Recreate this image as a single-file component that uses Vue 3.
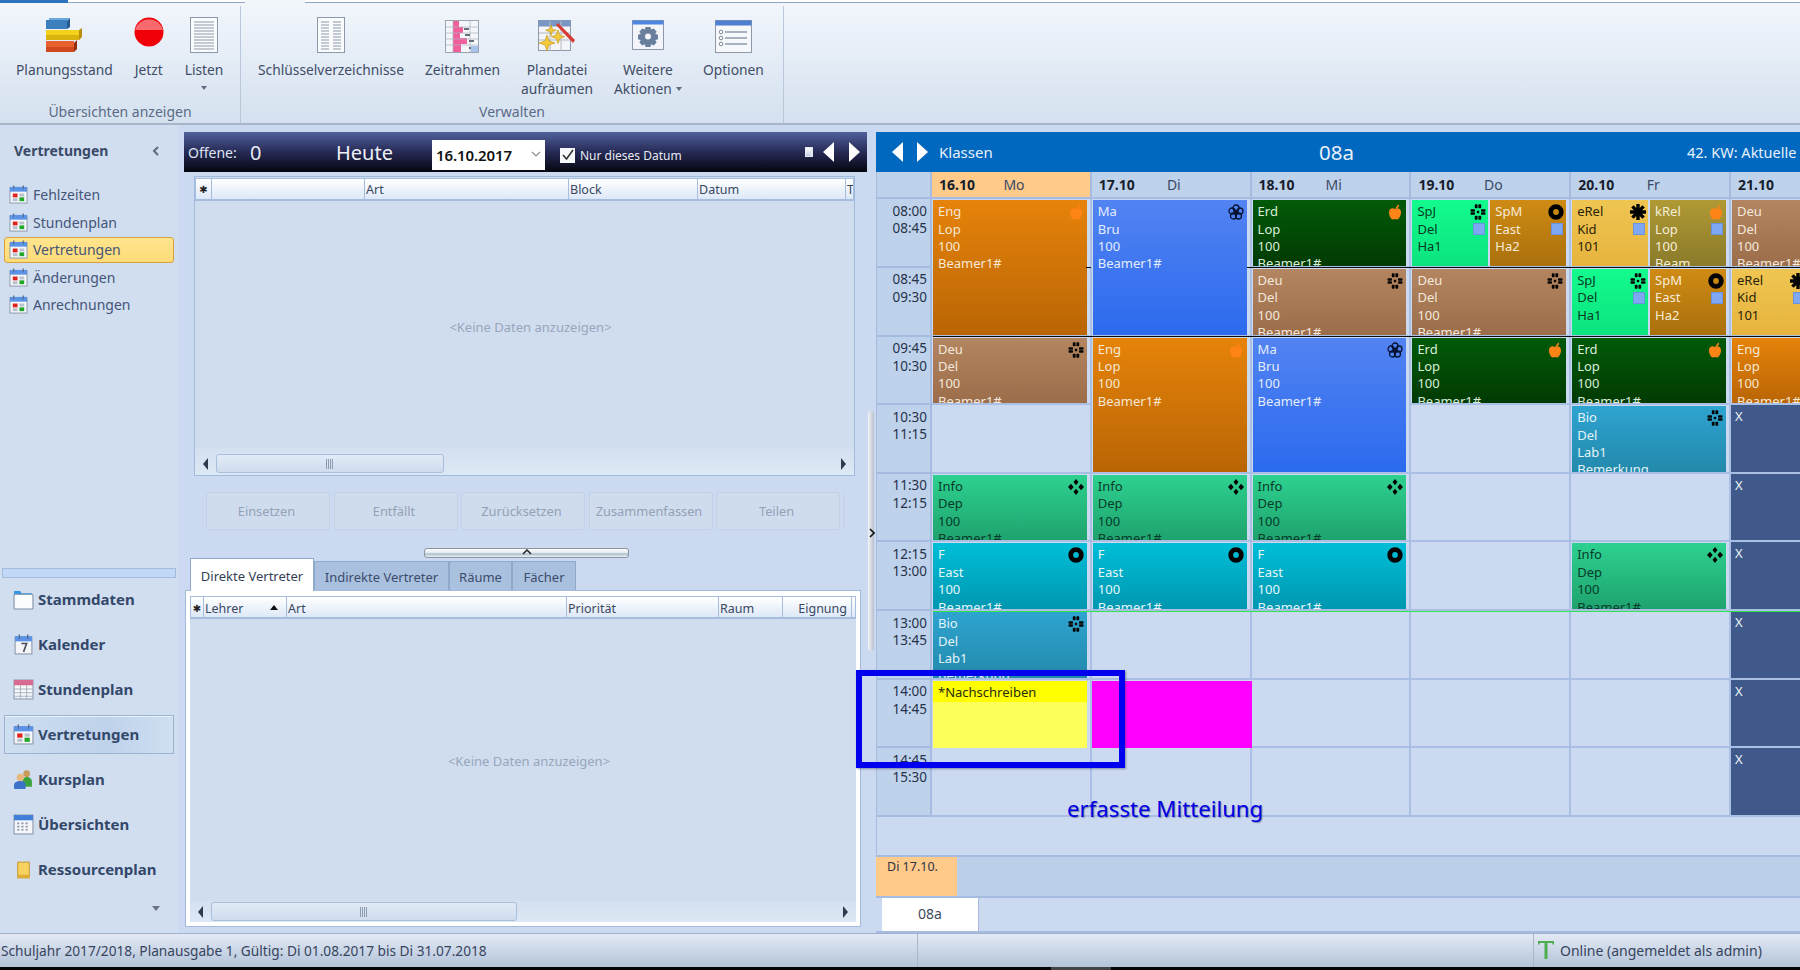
<script setup>
const L = {
  eng: { cls: 'eng', lines: ['Eng', 'Lop', '100', 'Beamer1#'], icon: 'apple' },
  ma: { cls: 'ma', lines: ['Ma', 'Bru', '100', 'Beamer1#'], icon: 'flower' },
  erd: { cls: 'erd', lines: ['Erd', 'Lop', '100', 'Beamer1#'], icon: 'apple' },
  deu: { cls: 'deu', lines: ['Deu', 'Del', '100', 'Beamer1#'], icon: 'pin' },
  info: { cls: 'info', lines: ['Info', 'Dep', '100', 'Beamer1#'], icon: 'dia' },
  f: { cls: 'fr', lines: ['F', 'East', '100', 'Beamer1#'], icon: 'ring' },
  bio: { cls: 'bio', lines: ['Bio', 'Del', 'Lab1', 'Bemerkung'], icon: 'pin' },
  spj: { cls: 'spj', lines: ['SpJ', 'Del', 'Ha1'], icon: 'pin', mark: true },
  spm: { cls: 'spm', lines: ['SpM', 'East', 'Ha2'], icon: 'ring', mark: true },
  erel: { cls: 'erel', lines: ['eRel', 'Kid', '101'], icon: 'star', mark: true },
  krel: { cls: 'krel', lines: ['kRel', 'Lop', '100', 'Beam'], icon: 'apple', mark: true }
}
const one = (k, span = 1) => ({ kind: 'one', span, parts: [L[k]] })
const two = (a, b) => ({ kind: 'two', span: 1, parts: [L[a], L[b]] })
const E = { kind: 'empty', span: 1 }
const NOTE = { kind: 'note', span: 1 }
const MAG = { kind: 'mag', span: 1 }
const X = { kind: 'x', span: 1 }

const days = [
  { date: '16.10', name: 'Mo', today: true, cells: [one('eng', 2), one('deu'), E, one('info'), one('f'), one('bio'), NOTE, E] },
  { date: '17.10', name: 'Di', cells: [one('ma', 2), one('eng', 2), one('info'), one('f'), E, MAG, E] },
  { date: '18.10', name: 'Mi', cells: [one('erd'), one('deu'), one('ma', 2), one('info'), one('f'), E, E, E] },
  { date: '19.10', name: 'Do', cells: [two('spj', 'spm'), one('deu'), one('erd'), E, E, E, E, E, E] },
  { date: '20.10', name: 'Fr', cells: [two('erel', 'krel'), two('spj', 'spm'), one('erd'), one('bio'), E, one('info'), E, E, E] },
  { date: '21.10', name: 'Sa', cells: [one('deu'), two('erel', 'krel'), one('eng'), X, X, X, X, X, X] }
]
const times = [
  ['08:00', '08:45'], ['08:45', '09:30'], ['09:45', '10:30'], ['10:30', '11:15'], ['11:30', '12:15'],
  ['12:15', '13:00'], ['13:00', '13:45'], ['14:00', '14:45'], ['14:45', '15:30']
]
const subItems = ['Fehlzeiten', 'Stundenplan', 'Vertretungen', 'Änderungen', 'Anrechnungen']
const navItems = [
  { t: 'Stammdaten', i: 'n-folder' }, { t: 'Kalender', i: 'n-cal7' }, { t: 'Stundenplan', i: 'n-table' },
  { t: 'Vertretungen', i: 'cal', active: true }, { t: 'Kursplan', i: 'n-people' }, { t: 'Übersichten', i: 'n-over' }, { t: 'Ressourcenplan', i: 'n-res' }
]
const actions = ['Einsetzen', 'Entfällt', 'Zurücksetzen', 'Zusammenfassen', 'Teilen']
</script>

<template>
  <div class="app">
    <svg class="defs" aria-hidden="true">
      <symbol id="cal" viewBox="0 0 20 20">
        <rect x="1" y="3" width="18" height="16" fill="#f4f6fa" stroke="#8b97a8" />
        <rect x="1" y="2" width="18" height="5" fill="#5b93e6" />
        <path d="M5 0.5v4M15 0.5v4" stroke="#5a6f90" stroke-width="1.4" />
        <rect x="4" y="9" width="5" height="4" fill="#e0231c" />
        <rect x="11" y="9" width="5" height="3" fill="#b9c1cc" />
        <rect x="4" y="14" width="5" height="3" fill="#b9c1cc" />
        <rect x="11" y="13" width="5" height="4" fill="#22a829" />
      </symbol>
      <symbol id="n-folder" viewBox="0 0 20 20">
        <path d="M1 4V2h6l1 2h10v3H1z" fill="#2f97e8" />
        <rect x="1" y="5" width="18" height="14" rx="1" fill="#fbfcfe" stroke="#7d8da3" />
      </symbol>
      <symbol id="n-cal7" viewBox="0 0 20 20">
        <rect x="2" y="3" width="16" height="16" fill="#f3f5f9" stroke="#8b97a8" />
        <rect x="2" y="2" width="16" height="5" fill="#5b93e6" />
        <path d="M6 0.5v4M14 0.5v4" stroke="#5a6f90" stroke-width="1.4" />
        <path d="M8 9h5l-3 8" fill="none" stroke="#444c58" stroke-width="1.5" />
      </symbol>
      <symbol id="n-table" viewBox="0 0 20 20">
        <rect x="1" y="1" width="18" height="18" fill="#f7f8fb" stroke="#8b97a8" />
        <rect x="1" y="1" width="18" height="5" fill="#d96a92" />
        <path d="M1 9.500h18M1 13h18M1 16.500h18M7 6v13M13 6v13" stroke="#a9b3c2" />
      </symbol>
      <symbol id="n-people" viewBox="0 0 20 20">
        <circle cx="13" cy="4.500" r="3.200" fill="#c99a5a" />
        <path d="M9 12c0-3 2-4.500 4-4.500s5 1 5 4.500v5H9z" fill="#3aa33f" />
        <circle cx="7" cy="8" r="3.400" fill="#e8b77b" />
        <path d="M1 19v-3.500C1 12.500 4 11.500 7 11.500s5 1 5 4V19z" fill="#3d72c9" />
      </symbol>
      <symbol id="n-over" viewBox="0 0 20 20">
        <rect x="1" y="1" width="18" height="18" fill="#f4f6fa" stroke="#8b97a8" />
        <rect x="1" y="1" width="18" height="5" fill="#3e7fd8" />
        <path d="M4 9h2M8 9h2M12 9h2M4 12h2M8 12h2M12 12h2M4 15h2M8 15h2M12 15h2" stroke="#8a96a8" stroke-width="1.600" />
      </symbol>
      <symbol id="n-res" viewBox="0 0 20 20">
        <rect x="4.500" y="3" width="11" height="15" fill="#f7d25f" stroke="#c69a34" />
        <rect x="4.500" y="15" width="11" height="3" fill="#e2ad35" />
      </symbol>
      <symbol id="apple" viewBox="0 0 16 16">
        <path d="M8.500 5C9 3 10 1.500 12 0.500c.3 2-1 3.800-3.500 4.500z" fill="#ff8418" />
        <path d="M8 5c2-1.500 6-1 6 3.500 0 3.500-2.500 7-4 7-.8 0-1.300-.5-2-.5s-1.200.5-2 .5c-1.800 0-4-3.500-4-7C2 4 6 3.500 8 5z" fill="#ff8418" />
      </symbol>
      <symbol id="flower" viewBox="0 0 16 16">
        <g fill="none" stroke="#061233" stroke-width="1.300">
          <circle cx="8" cy="4" r="3" /><circle cx="12" cy="7" r="3" /><circle cx="10.500" cy="12" r="3" /><circle cx="5.500" cy="12" r="3" /><circle cx="4" cy="7" r="3" />
        </g>
        <circle cx="8" cy="8.500" r="2.800" fill="#061233" />
      </symbol>
      <symbol id="pin" viewBox="0 0 16 16">
        <g fill="#050505">
          <rect x="4.800" y=".3" width="2.800" height="4" rx=".8" /><rect x="8.400" y=".3" width="2.800" height="4" rx=".8" />
          <rect x="4.800" y="11.700" width="2.800" height="4" rx=".8" /><rect x="8.400" y="11.700" width="2.800" height="4" rx=".8" />
          <rect x=".5" y="5.200" width="4.500" height="2.500" rx=".8" /><rect x=".5" y="8.300" width="4.500" height="2.500" rx=".8" />
          <rect x="11" y="5.200" width="4.500" height="2.500" rx=".8" /><rect x="11" y="8.300" width="4.500" height="2.500" rx=".8" />
          <rect x="6.800" y="6.800" width="2.400" height="2.400" />
        </g>
      </symbol>
      <symbol id="dia" viewBox="0 0 16 16">
        <g fill="#050505">
          <path d="M8 0l2.500 3L8 6.200 5.500 3z" /><path d="M8 9.800l2.500 3L8 16l-2.500-3.200z" />
          <path d="M3 4.800l2.600 3.200L3 11.200 0 8z" /><path d="M13 4.800l3 3.200-3 3.200L10.400 8z" />
        </g>
      </symbol>
      <symbol id="ring" viewBox="0 0 16 16">
        <circle cx="8" cy="8" r="5.300" fill="none" stroke="#020202" stroke-width="4.800" />
      </symbol>
      <symbol id="star" viewBox="0 0 16 16">
        <g stroke="#020202" stroke-width="3.400">
          <path d="M8 0v16M0 8h16M2.400 2.400l11.200 11.200M13.600 2.400L2.400 13.600" />
        </g>
      </symbol>
    </svg>

    <header class="ribbon">
      <div class="strip"><span class="s-blue"></span><span class="s-white s-a"></span><span class="s-gap"></span><span class="s-white s-b"></span></div>
      <div class="ribbon-body">
        <section class="group g1">
          <div class="btns">
            <div class="rb">
              <div class="ri">
                <svg width="38" height="36" viewBox="0 0 38 36">
                  <path d="M4 1h21l-3 3H4z" fill="#6aa7dc" /><path d="M22 4l3-3v9l-3 2z" fill="#24598f" /><rect x="1" y="3" width="21" height="9" fill="#3c7fbf" />
                  <path d="M1 13h33l3-2v9l-3 3z" fill="#b79208" /><rect x="1" y="13" width="33" height="10" fill="#f2d21a" />
                  <rect x="1" y="18" width="33" height="5" fill="#d9b40d" />
                  <path d="M29 26l3-3v9l-3 3z" fill="#93300e" /><rect x="1" y="24" width="28" height="11" fill="#e9602f" />
                  <rect x="1" y="30" width="28" height="5" fill="#cf4a1e" />
                </svg>
              </div>
              <div class="rl">Planungsstand</div>
            </div>
            <div class="rb">
              <div class="ri">
                <svg width="30" height="30" viewBox="0 0 30 30">
                  <circle cx="15" cy="15" r="14.500" fill="#f2000a" /><path d="M1 13a14.500 14.500 0 0 1 28 0z" fill="#f86a6e" />
                </svg>
              </div>
              <div class="rl">Jetzt</div>
            </div>
            <div class="rb">
              <div class="ri">
                <svg width="28" height="36" viewBox="0 0 28 36">
                  <rect x=".5" y=".5" width="27" height="35" fill="#fafbfd" stroke="#8d98a8" />
                  <path d="M4 5h20M4 8h20M4 11h20M4 14h20M4 17h20M4 20h20M4 23h20M4 26h20M4 29h20M4 32h20" stroke="#b3bbc6" stroke-width="1.500" />
                </svg>
              </div>
              <div class="rl">Listen</div>
              <div class="ar"></div>
            </div>
          </div>
          <div class="gl">Übersichten anzeigen</div>
        </section>
        <section class="group g2">
          <div class="btns">
            <div class="rb">
              <div class="ri">
                <svg width="28" height="36" viewBox="0 0 28 36">
                  <rect x=".5" y=".5" width="27" height="35" fill="#fafbfd" stroke="#8d98a8" />
                  <path d="M4 5h8M4 8h8M4 11h8M4 14h8M4 17h8M4 20h8M4 23h8M4 26h8M4 29h8M4 32h8M16 5h8M16 8h8M16 11h8M16 14h8M16 17h8M16 20h8M16 23h8M16 26h8M16 29h8M16 32h8" stroke="#b3bbc6" stroke-width="1.500" />
                </svg>
              </div>
              <div class="rl">Schlüsselverzeichnisse</div>
            </div>
            <div class="rb">
              <div class="ri ri-b">
                <svg width="34" height="33" viewBox="0 0 34 33">
                  <rect x=".5" y=".5" width="33" height="32" fill="#f4f6fa" stroke="#9aa5b4" />
                  <path d="M8 1h6v6h4v6h-3v5h7v6h-6v8H8z" fill="#f2609c" />
                  <path d="M1 7h32M1 13h32M1 19h32M1 25h32M8 1v31M25 1v31" stroke="#aab3c0" stroke-opacity=".7" />
                  <path d="M19 9h5M20 15h5M24 21h5M24 28h5" stroke="#666e78" stroke-width="2" />
                  <rect x="26" y="26" width="7" height="6" fill="#a9c4ec" />
                </svg>
              </div>
              <div class="rl">Zeitrahmen</div>
            </div>
            <div class="rb">
              <div class="ri ri-b">
                <svg width="38" height="31" viewBox="0 0 38 31">
                  <rect x=".5" y=".5" width="32" height="30" fill="#f3f5f8" stroke="#8d98a8" />
                  <rect x=".5" y=".5" width="32" height="6" fill="#7a97c4" />
                  <path d="M1 13h32M1 20h32M12 1v30M23 1v30" stroke="#b3bbc6" />
                  <path d="M18 5l2-2 17 17-2 3z" fill="#d63a32" />
                  <path d="M9 15l2 6 6 2-6 2-2 6-2-6-6-2 6-2z" fill="#f3cb3c" stroke="#c9991d" stroke-width=".7" />
                  <path d="M20 10l1.700 5 5 1.700-5 1.700-1.700 5-1.700-5-5-1.700 5-1.700z" fill="#f3cb3c" stroke="#c9991d" stroke-width=".7" />
                  <path d="M13 5l1.300 4 4 1.300-4 1.300-1.300 4-1.300-4-4-1.300 4-1.300z" fill="#f3cb3c" stroke="#c9991d" stroke-width=".7" />
                </svg>
              </div>
              <div class="rl">Plandatei<br />aufräumen</div>
            </div>
            <div class="rb">
              <div class="ri ri-b">
                <svg width="32" height="30" viewBox="0 0 32 30">
                  <rect x=".5" y=".5" width="31" height="29" fill="#f3f5fa" stroke="#8d98a8" />
                  <rect x=".5" y=".5" width="31" height="4" fill="#4f86e0" />
                  <path d="M13.500 7h5l.7 2.600 2.400-1 3 3-1.300 2.300 2.700.8v4.600l-2.700.8 1.300 2.300-3 3-2.400-1.200-.7 2.800h-5l-.7-2.800-2.400 1.200-3-3 1.300-2.300-2.700-.8v-4.600l2.700-.8-1.300-2.300 3-3 2.400 1z" fill="#6a7f9c" />
                  <circle cx="16" cy="16.500" r="3" fill="#f3f5fa" />
                </svg>
              </div>
              <div class="rl">Weitere<br />Aktionen<span class="ar ar-in"></span></div>
            </div>
            <div class="rb">
              <div class="ri ri-b">
                <svg width="37" height="33" viewBox="0 0 37 33">
                  <rect x=".5" y=".5" width="36" height="32" fill="#f6f8fc" stroke="#8d98a8" />
                  <rect x=".5" y=".5" width="36" height="5" fill="#4f7fd0" />
                  <path d="M10 12h22M10 18h22M10 24h22" stroke="#8e9aaa" stroke-width="1.400" />
                  <circle cx="6" cy="12" r="1.800" fill="#fff" stroke="#7d8998" /><circle cx="6" cy="18" r="1.800" fill="#fff" stroke="#7d8998" /><circle cx="6" cy="24" r="1.800" fill="#fff" stroke="#7d8998" />
                </svg>
              </div>
              <div class="rl">Optionen</div>
            </div>
          </div>
          <div class="gl">Verwalten</div>
        </section>
      </div>
    </header>

    <main class="main">
      <aside class="side">
        <div class="side-h"><span>Vertretungen</span><svg width="8" height="10" viewBox="0 0 8 10"><path d="M6 1L2 5l4 4" fill="none" stroke="#5d6a80" stroke-width="2" /></svg></div>
        <ul class="sub">
          <li v-for="s in subItems" :key="s" :class="{ on: s === 'Vertretungen' }">
            <svg width="19" height="19"><use href="#cal" /></svg><span>{{ s }}</span>
          </li>
        </ul>
        <div class="side-sp"></div>
        <div class="side-split"></div>
        <ul class="nav">
          <li v-for="n in navItems" :key="n.t" :class="{ on: n.active }">
            <svg width="21" height="21"><use :href="'#' + n.i" /></svg><span>{{ n.t }}</span>
          </li>
        </ul>
        <div class="nav-more"><i></i></div>
      </aside>

      <section class="mid">
        <div class="dark">
          <span class="d-of">Offene:</span><span class="d-zero">0</span><span class="d-heute">Heute</span>
          <div class="d-date"><b>16.10.2017</b><svg width="10" height="7" viewBox="0 0 10 7"><path d="M1 1l4 4 4-4" fill="none" stroke="#8a8f9a" stroke-width="1.200" /></svg></div>
          <span class="d-chk"><svg width="14" height="14" viewBox="0 0 14 14"><path d="M2 7l3.500 4L12 2" fill="none" stroke="#333" stroke-width="1.600" /></svg></span>
          <span class="d-lbl">Nur dieses Datum</span>
          <span class="d-sp"></span>
          <span class="d-pin"></span>
          <i class="tri tri-l"></i><i class="tri tri-r"></i>
        </div>

        <div class="gridbox top">
          <div class="gh">
            <div class="ghc ast" style="width:16px">✱</div><div class="ghc" style="width:153px"></div><div class="ghc" style="width:204px">Art</div><div class="ghc" style="width:129px">Block</div><div class="ghc" style="width:148px">Datum</div><div class="ghc last">T</div>
          </div>
          <div class="gb"><span>&lt;Keine Daten anzuzeigen&gt;</span></div>
          <div class="gs">
            <i class="st st-l"></i><div class="thumb t1"><em></em></div><span class="gs-sp"></span><i class="st st-r"></i>
          </div>
        </div>

        <div class="acts">
          <div v-for="a in actions" :key="a" class="act">{{ a }}</div>
          <div class="act"></div>
        </div>

        <div class="handle"><svg width="10" height="6" viewBox="0 0 10 6"><path d="M1 5l4-4 4 4" fill="none" stroke="#222" stroke-width="1.500" /></svg></div>

        <div class="tabs">
          <div class="tab on">Direkte Vertreter</div><div class="tab t2">Indirekte Vertreter</div><div class="tab t3">Räume</div><div class="tab t4">Fächer</div>
        </div>
        <div class="panel">
          <div class="gh">
            <div class="ghc ast" style="width:13px">✱</div>
            <div class="ghc lehrer" style="width:83px">Lehrer<i></i></div>
            <div class="ghc" style="width:280px">Art</div><div class="ghc" style="width:152px">Priorität</div><div class="ghc" style="width:64px">Raum</div><div class="ghc eign" style="width:69px">Eignung</div><div class="ghc last"></div>
          </div>
          <div class="gb"><span>&lt;Keine Daten anzuzeigen&gt;</span></div>
          <div class="gs">
            <i class="st st-l"></i><div class="thumb t2w"><em></em></div><span class="gs-sp"></span><i class="st st-r"></i>
          </div>
        </div>
      </section>

      <div class="vsplit"><div class="vthumb"></div><svg class="vcaret" width="6" height="10" viewBox="0 0 6 10"><path d="M1 1l4 4-4 4" fill="none" stroke="#111" stroke-width="1.600" /></svg></div>

      <section class="right">
        <div class="blue">
          <i class="tri tri-l"></i><i class="tri tri-r"></i>
          <span class="b-kl">Klassen</span>
          <span class="b-name">08a</span>
          <span class="b-kw">42. KW: Aktuelle Woche</span>
        </div>
        <div class="tt">
          <div class="tslot thead"></div>
          <div v-for="t in times" :key="t[0] + t[1]" class="tslot ttime"><div>{{ t[0] }}</div><div>{{ t[1] }}</div></div>
          <template v-for="d in days" :key="d.date">
            <div class="dhead" :class="{ today: d.today }"><b>{{ d.date }}</b><span>{{ d.name }}</span></div>
            <div v-for="(c, i) in d.cells" :key="i" class="slot" :class="'k-' + c.kind" :style="{ gridRow: 'span ' + c.span }">
              <template v-if="c.kind === 'one' || c.kind === 'two'">
                <div v-for="p in c.parts" :key="p.cls" class="lesson" :class="p.cls">
                  <div v-for="(ln, j) in p.lines" :key="j" class="ln">{{ ln }}</div>
                  <svg class="lic" width="16" height="16"><use :href="'#' + p.icon" /></svg>
                  <i v-if="p.mark" class="lmark"></i>
                </div>
              </template>
              <div v-else-if="c.kind === 'note'" class="note"><div class="note-h">*Nachschreiben</div></div>
              <div v-else-if="c.kind === 'mag'" class="mag"></div>
              <div v-else-if="c.kind === 'x'" class="xc">X</div>
            </div>
          </template>
          <div class="bl bl1"></div><div class="bl bl2"></div><div class="bl bl3"></div><div class="gl-green"></div>
        </div>
        <div class="blank"></div>
        <div class="daybar"><div class="daytag">Di 17.10.</div></div>
        <div class="tabbar"><div class="ctab">08a</div></div>
      </section>
    </main>

    <footer class="status">
      <span class="st-t">Schuljahr 2017/2018, Planausgabe 1, Gültig: Di 01.08.2017 bis Di 31.07.2018</span>
      <span class="st-d d1"></span>
      <span class="st-d d2"></span>
      <svg class="st-i" width="18" height="20" viewBox="0 0 18 20"><path d="M1 1h16v3.500h-1.500V3H10.500v16h-3V3H2.500v1.500H1z" fill="#4cae4f" /></svg>
      <span class="st-on">Online (angemeldet als admin)</span>
    </footer>
    <div class="black"><i></i></div>

    <div class="anno-box"></div>
    <div class="anno-text">erfasste Mitteilung</div>
  </div>
</template>

<style scoped>
.app { position: relative; width: 1800px; height: 970px; overflow: hidden; display: flex; flex-direction: column; background: #cbdaf0; font-family: "Noto Sans", "Open Sans", sans-serif; color: #3c4a64; }
.defs { position: absolute; width: 0; height: 0; }

.ribbon { height: 125px; flex: none; display: flex; flex-direction: column; background: linear-gradient(#f3f7fc, #dde7f3 70%, #d5e1ef); border-bottom: 2px solid #a6b5c9; box-sizing: border-box; }
.strip { height: 3px; display: flex; flex: none; }
.s-blue { width: 68px; background: #2c72c0; }
.s-white { background: #fff; border-bottom: 1px solid #8fa5c4; }
.s-a { width: 177px; }
.s-gap { width: 60px; }
.s-b { flex: 1; }
.ribbon-body { flex: 1; display: flex; padding-top: 3px; min-height: 0; }
.group { display: flex; flex-direction: column; border-right: 1px solid #b8c7da; box-sizing: border-box; }
.g1 { width: 241px; padding-left: 16px; }
.g2 { width: 543px; padding-left: 17px; }
.btns { display: flex; gap: 21px; height: 98px; }
.rb { display: flex; flex-direction: column; align-items: center; position: relative; }
.ri { height: 49px; padding-top: 11px; box-sizing: border-box; display: flex; justify-content: center; align-items: flex-start; flex: none; }
.ri-b { padding-top: 14px; }
.rl { font-size: 13.800px; line-height: 19px; text-align: center; margin-top: 5px; white-space: nowrap; color: #3f4d66; }
.ar { width: 0; height: 0; border: 3.500px solid transparent; border-top: 4px solid #5f6c80; border-bottom: 0; margin-top: 7px; }
.ar-in { display: inline-block; margin: 0 0 3px 4px; }
.gl { font-size: 14px; line-height: 18px; text-align: center; color: #5a6b86; margin-left: -16px; margin-top: -1px; }
.g2 .gl { margin-left: -17px; }

.main { flex: 1; display: flex; min-height: 0; }

.side { width: 178px; flex: none; display: flex; flex-direction: column; background: #d1deef; }
.side-h { height: 40px; margin-top: 7px; padding: 0 18px 3px 14px; box-sizing: border-box; display: flex; align-items: center; justify-content: space-between; font-weight: 700; font-size: 14px; color: #3a4a68; flex: none; }
.sub { list-style: none; margin: 9px 0 0; padding: 0; }
.sub li { height: 27.500px; display: flex; align-items: center; gap: 5px; font-size: 14px; padding-left: 9px; position: relative; color: #44557a; }
.sub li svg { position: relative; }
.sub li span { position: relative; }
.sub li.on::before { content: ""; position: absolute; left: 4px; width: 170px; top: 1px; bottom: 1px; background: linear-gradient(#ffe58f, #ffdb76); border: 1px solid #d8a040; border-radius: 3px; box-sizing: border-box; }
.side-sp { flex: 1; }
.side-split { height: 10px; margin: 0 2px; background: #c2d8f6; border: 1px solid #a5bddd; box-sizing: border-box; flex: none; }
.nav { list-style: none; margin: -1px 0 0; padding: 0; flex: none; }
.nav li { height: 45px; display: flex; align-items: center; gap: 4px; padding-left: 13px; font-weight: 700; font-size: 15px; color: #33486a; position: relative; }
.nav li svg, .nav li span { position: relative; }
.nav li.on::before { content: ""; position: absolute; left: 4px; width: 170px; top: 3px; bottom: 3px; background: linear-gradient(90deg, #cfdff2, #bed2ea 60%, #cfdff2); border: 1px solid #9cb3d2; box-shadow: inset 0 1px 0 #eaf1fa; box-sizing: border-box; }
.nav-more { height: 41.500px; flex: none; display: flex; justify-content: flex-end; padding: 14px 18px 0 0; box-sizing: border-box; }
.nav-more i { width: 0; height: 0; border: 4px solid transparent; border-top: 5px solid #6a7486; border-bottom: 0; }

.mid { width: 683px; margin-left: 6px; flex: none; padding-top: 7px; display: flex; flex-direction: column; box-sizing: border-box; }
.dark { height: 40px; flex: none; display: flex; align-items: center; background: linear-gradient(#51609b, #262a55 50%, #05060f); color: #fff; padding: 0 7px 0 4px; }
.d-of { font-size: 14px; width: 62px; color: #dfe4ef; }
.d-zero { font-size: 20px; width: 86px; color: #e6eaf3; }
.d-heute { font-size: 20px; width: 96px; color: #eef0f7; }
.d-date { width: 113px; height: 30px; margin-top: 5px; background: #fff; display: flex; align-items: center; justify-content: space-between; padding: 0 4px; box-sizing: border-box; color: #111; font-size: 15px; }
.d-date b { font-weight: 600; letter-spacing: -.1px; }
.d-chk { width: 15px; height: 15px; margin: 6px 0 0 15px; background: #f7f8fa; display: flex; align-items: center; justify-content: center; }
.d-lbl { font-size: 12px; margin: 6px 0 0 5px; color: #e6e9f2; }
.d-sp { flex: 1; }
.d-pin { width: 5px; height: 8px; border: 1px solid #e6e9f2; border-right-width: 2px; margin-right: 10px; box-sizing: content-box; background: linear-gradient(#fff, #c5cde0); }
.tri { width: 0; height: 0; display: block; flex: none; border-top: 10px solid transparent; border-bottom: 10px solid transparent; }
.tri-l { border-right: 11px solid #fff; }
.tri-r { border-left: 11px solid #fff; }
.dark .tri-l { margin-right: 15px; }

.gridbox { border: 1px solid #a3bbdb; display: flex; flex-direction: column; box-sizing: border-box; background: #d0ddef; }
.top { width: 661px; height: 300px; margin: 4px 0 0 10px; padding-top: 1px; flex: none; }
.gh { display: flex; height: 23px; flex: none; background: linear-gradient(#ffffff, #dde8f7); border: 1px solid #a6bddd; border-bottom-width: 2px; box-sizing: border-box; }
.ghc { border-right: 1px solid #a6bddd; font-size: 12.500px; line-height: 21px; padding-left: 1px; box-sizing: border-box; overflow: hidden; white-space: nowrap; color: #3a4862; flex: none; }
.ghc.ast { font-family: "DejaVu Sans", sans-serif; font-size: 10px; text-align: center; padding: 0; color: #222; }
.ghc.last { flex: 1; border-right: 0; }
.gb { flex: 1; display: flex; align-items: center; justify-content: center; font-size: 13px; color: #97a6bc; background: #d0ddef; padding: 5px 0 0 12px; box-sizing: border-box; }
.panel .gb { padding-top: 1px; }
.gs { display: flex; height: 27px; flex: none; align-items: flex-end; padding: 0 8px 2px; background: linear-gradient(#d4e0f0, #dde8f5); box-sizing: border-box; }
.panel .gs { height: 21px; align-items: center; padding-bottom: 0; }
.top .st { margin-bottom: 3px; }
.gs-sp { flex: 1; }
.st { display: block; width: 0; height: 0; border-top: 6px solid transparent; border-bottom: 6px solid transparent; }
.st-l { border-right: 5px solid #2e3a4e; }
.st-r { border-left: 5px solid #2e3a4e; }
.thumb { height: 19px; background: linear-gradient(#e2ebf7, #cfdcee); border: 1px solid #a9bfdc; border-radius: 3px; display: flex; align-items: center; justify-content: center; margin-left: 8px; box-sizing: border-box; }
.thumb em { width: 8px; height: 10px; background: repeating-linear-gradient(90deg, #8d9bb0 0 1px, transparent 1px 2px); }
.t1 { width: 228px; }
.t2w { width: 306px; }

.acts { display: flex; gap: 3.500px; margin: 16px 0 0 22px; height: 38px; width: 640px; overflow: hidden; flex: none; }
.act { width: 124px; flex: none; height: 38px; box-sizing: border-box; background: #cfdcee; border: 1px solid #c2d1e6; border-radius: 3px; font-size: 12.800px; line-height: 36px; text-align: center; color: #93a1b6; padding-right: 3px; }

.handle { width: 205px; height: 10px; margin: 18px 0 0 240px; flex: none; background: linear-gradient(#fff, #dfe7ef 50%, #a9bdc9 60%, #eef2f6); border: 1px solid #8b94a0; border-radius: 3px; box-sizing: border-box; display: flex; justify-content: center; }

.tabs { display: flex; height: 32px; margin-left: 6px; flex: none; align-items: flex-end; }
.tab { height: 29px; font-size: 13px; line-height: 30px; text-align: center; background: #a9c0de; border: 1px solid #8fa9cc; border-bottom: 0; box-sizing: border-box; color: #3c4c6c; }
.tab.on { height: 33px; width: 124px; background: #fff; color: #333f55; line-height: 35px; position: relative; z-index: 1; margin-bottom: -1px; }
.t2 { width: 135px; }
.t3 { width: 63px; }
.t4 { width: 64px; }
.panel { width: 676px; height: 337px; margin-left: 1px; flex: none; border: 1px solid #a3bbdb; background: #fff; padding: 5px 4px 4px; box-sizing: border-box; display: flex; flex-direction: column; }
.panel .ghc { line-height: 23px; }
.lehrer { position: relative; }
.lehrer i { position: absolute; right: 8px; top: 8px; width: 0; height: 0; border: 4px solid transparent; border-bottom: 5px solid #111; border-top: 0; }
.eign { text-align: right; padding-right: 4px; }

.vsplit { width: 9px; flex: none; position: relative; padding-top: 286px; box-sizing: border-box; }
.vthumb { width: 6px; height: 240px; margin-left: 1px; background: linear-gradient(90deg, #f3f5f8, #b6c0cc); border-radius: 3px; }
.vcaret { position: absolute; left: 2px; top: 403px; }

.right { flex: 1; min-width: 0; padding-top: 7px; display: flex; flex-direction: column; overflow: hidden; }
.blue { height: 40px; flex: none; background: #0068be; display: flex; align-items: center; color: #e8f1fb; position: relative; padding-left: 16px; font-size: 15px; white-space: nowrap; }
.blue .tri-r { margin-left: 14px; }
.b-kl { margin-left: 11px; }
.b-name { position: absolute; left: 443px; font-size: 20.500px; }
.b-kw { position: absolute; left: 811px; font-size: 14.500px; }

.tt { position: relative; display: grid; grid-auto-flow: column; grid-template-columns: 55px repeat(6, 159.800px); grid-template-rows: 27.200px repeat(9, 68.670px); flex: none; border-left: 1px solid #a5bce0; height: 645.230px; box-sizing: border-box; }
.tslot { background: #bfd2ec; border-right: 2px solid #a5bce0; border-bottom: 2px solid #a5bce0; box-sizing: border-box; }
.ttime { font-size: 13.500px; line-height: 17.500px; text-align: right; padding: 3.500px 3px 0 0; color: #27324a; overflow: hidden; }
.dhead { background: #bfd2ec; border-right: 2px solid #a5bce0; border-bottom: 2px solid #a5bce0; box-sizing: border-box; font-size: 14px; line-height: 26px; display: flex; color: #3a4a66; padding-left: 7px; overflow: hidden; white-space: nowrap; }
.dhead b { width: 63px; color: #171d2b; font-weight: 700; flex: none; }
.dhead span { width: 24px; text-align: center; flex: none; }
.dhead.today { background: #ffca8a; }
.slot { background: #cbdaf0; border-right: 2px solid #a9c0e4; border-bottom: 2px solid #a9c0e4; box-sizing: border-box; display: flex; min-width: 0; min-height: 0; overflow: hidden; }
.k-one, .k-two { padding: 1px 3px 0 1px; gap: 2px; }
.lesson { flex: 1; min-width: 0; position: relative; overflow: hidden; padding: 3px 0 0 5px; font-size: 13px; line-height: 17.400px; white-space: nowrap; }
.lic { position: absolute; top: 4px; right: 3px; }
.k-two .lic { right: 2px; }
.lmark { position: absolute; right: 3px; top: 23px; width: 12px; height: 12px; background: #7ea9f2; border: 1px solid #6c92de; box-sizing: border-box; }
.eng { background: linear-gradient(#e6830a, #b96505); color: #f6e8d4; }
.ma { background: linear-gradient(#5283f2, #2b6aee); color: #e4edfc; }
.erd { background: linear-gradient(#025a08, #023a03); color: #dbeedb; }
.deu { background: linear-gradient(#b38560, #9c6d4a); color: #f4e8dc; }
.info { background: linear-gradient(#2dd18f, #1fa36e); color: #063a2a; }
.fr { background: linear-gradient(#00bed8, #0097b0); color: #e6f7fb; }
.bio { background: linear-gradient(#2ea4d0, #2389ab); color: #e4f3f9; }
.spj { background: linear-gradient(#13fb8e, #0be37f); color: #063a22; }
.spm { background: linear-gradient(#cf8b14, #a9700d); color: #f6ecd8; }
.erel { background: linear-gradient(#efc552, #e6b43e); color: #2a2208; }
.krel { background: linear-gradient(#b09a35, #8a7a2a); color: #f4efd8; }
.k-note { padding: 1px 3px 0 1px; border-bottom: 0; }
.note { flex: 1; background: #ffff5a; }
.note-h { height: 21px; background: #ffff00; font-size: 13px; line-height: 22px; color: #2a2a10; padding-left: 5px; }
.k-mag { padding: 1px 0 0; border-right: 0; border-bottom: 0; }
.mag { flex: 1; background: #ff00ff; }
.k-x { background: #3f5a8a; }
.xc { color: #eef2f8; font-size: 13px; line-height: 17px; padding: 3px 0 0 4px; }
.bl { position: absolute; height: 1.500px; background: #0b0b0b; }
.bl1 { top: 94.500px; left: 209px; width: 5px; }
.bl2 { top: 94.500px; left: 370px; right: 0; }
.bl3 { top: 163.500px; left: 56px; right: 0; }
.gl-green { position: absolute; top: 438.500px; left: 56px; right: 0; height: 1.500px; background: #2ee84a; }

.blank { height: 40px; flex: none; border-left: 1px solid #a5bce0; border-bottom: 2px solid #a5bce0; box-sizing: border-box; background: #cbdaf0; }
.daybar { height: 41px; flex: none; background: #bbcfe9; border-bottom: 2px solid #a5bce0; box-sizing: border-box; }
.daytag { width: 81px; height: 39px; background: #ffca8a; font-size: 12.500px; line-height: 19px; padding-left: 11px; box-sizing: border-box; color: #2e3546; }
.tabbar { flex: 1; padding-left: 6px; background: #cbdaf0; border-bottom: 2px solid #a5bce0; box-sizing: border-box; }
.ctab { width: 96px; height: 33px; background: #fff; font-size: 14px; line-height: 32px; text-align: center; color: #3f4a5e; border-right: 1px solid #a5bce0; }

.status { height: 34px; flex: none; background: linear-gradient(#e3eaf4, #b3c3d9); position: relative; display: flex; align-items: center; font-size: 13.700px; color: #37445e; white-space: nowrap; box-sizing: border-box; border-top: 1px solid #9fb2cd; }
.st-t { margin-left: 1px; }
.st-d { position: absolute; top: 0; bottom: 0; width: 1px; background: #a8b7cb; }
.d1 { left: 917px; }
.d2 { left: 1533px; }
.st-i { position: absolute; left: 1537px; top: 6px; }
.st-on { position: absolute; left: 1560px; font-size: 14px; }
.black { height: 3px; flex: none; background: #050505; position: relative; }
.black i { position: absolute; left: 1051px; width: 60px; height: 3px; background: #444; }

.anno-box { position: absolute; left: 856px; top: 670px; width: 269px; height: 98px; border: 6px solid #0000ee; box-sizing: border-box; box-shadow: 1px 1px 2px rgba(60, 60, 90, .5); }
.anno-text { position: absolute; left: 1067px; top: 794px; font-size: 22.200px; line-height: 30px; color: #0000e6; text-shadow: 1px 1px 1px rgba(70, 70, 110, .55); white-space: nowrap; }
</style>
